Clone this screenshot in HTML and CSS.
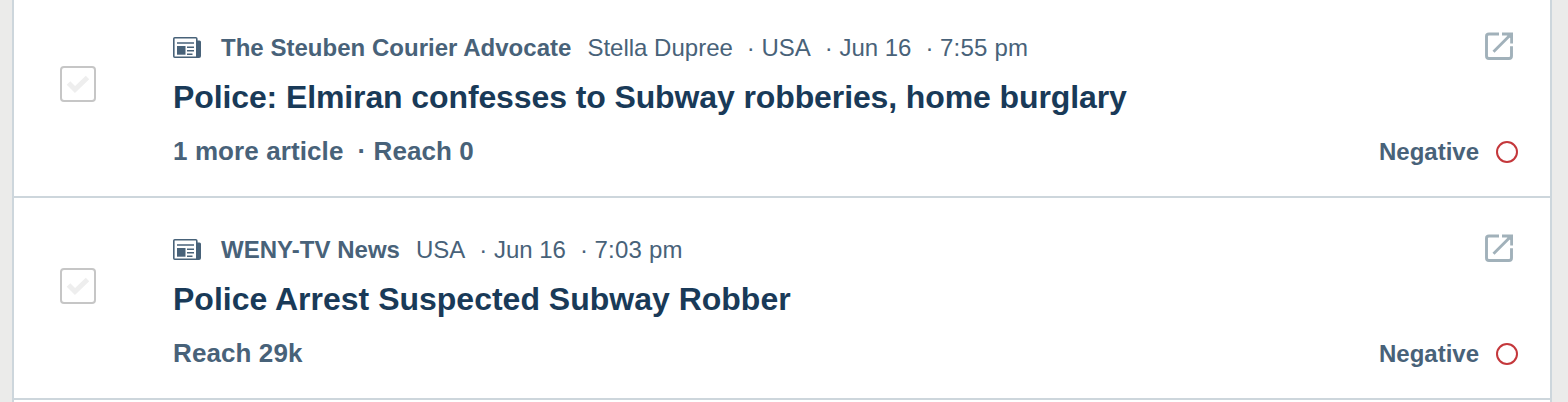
FILE: index.html
```html
<!DOCTYPE html>
<html lang="en">
<head>
<meta charset="utf-8">
<title>Articles</title>
<link rel="stylesheet" href="styles.css">
</head>
<body>
<svg class="defs" width="0" height="0">
  <symbol id="news" viewBox="0 0 28 22">
    <path d="M23 3.500h3.500q1.500 0 1.500 1.500v14q0 2-2 2H22z" fill="#486279"/>
    <rect x=".8" y=".8" width="23" height="19.400" rx="1" fill="#fff" stroke="#486279" stroke-width="1.600"/>
    <path d="M4 6h17M14 10.200h7M14 13.700h7M14 17.200h5.500" stroke="#486279" stroke-width="1.500"/>
    <rect x="4" y="9" width="8.500" height="8.700" fill="#486279"/>
  </symbol>
  <symbol id="open" viewBox="0 0 28 28">
    <path d="M14 2H4Q1.500 2 1.500 4.300v19.700q0 2.500 2.500 2.500h20q2.500 0 2.500-2.500V14.300M8.500 19.700L25 3.200" fill="none" stroke="#a1b1ba" stroke-width="2.900"/>
    <path d="M17 .6H28V11.500H25.200V6L22 3.400H17z" fill="#a1b1ba"/>
  </symbol>
  <symbol id="tick" viewBox="0 0 24 18">
    <path d="M2.500 8l6.500 6.500L21.500 2.500" fill="none" stroke="#eeeeee" stroke-width="5"/>
  </symbol>
</svg>
<main class="list">
  <article class="row">
    <span class="checkbox"><svg width="24" height="18"><use href="#tick"/></svg></span>
    <div class="body">
      <div class="meta">
        <svg class="news" width="28" height="22"><use href="#news"/></svg>
        <b class="source">The Steuben Courier Advocate</b>
        <span>Stella Dupree</span><i class="dot">·</i><span>USA</span><i class="dot">·</i><span>Jun 16</span><i class="dot">·</i><span class="time">7:55 pm</span>
      </div>
      <h2 class="title title-long">Police: Elmiran confesses to Subway robberies, home burglary</h2>
      <div class="stats"><span>1 more article</span><i class="dot">·</i><span>Reach 0</span></div>
    </div>
    <div class="side">
      <svg class="open" width="28" height="28"><use href="#open"/></svg>
      <div class="sentiment">Negative<span class="ring"></span></div>
    </div>
  </article>
  <article class="row">
    <span class="checkbox"><svg width="24" height="18"><use href="#tick"/></svg></span>
    <div class="body">
      <div class="meta">
        <svg class="news" width="28" height="22"><use href="#news"/></svg>
        <b class="source">WENY-TV News</b>
        <span>USA</span><i class="dot">·</i><span>Jun 16</span><i class="dot">·</i><span class="time">7:03 pm</span>
      </div>
      <h2 class="title">Police Arrest Suspected Subway Robber</h2>
      <div class="stats"><span>Reach 29k</span></div>
    </div>
    <div class="side">
      <svg class="open" width="28" height="28"><use href="#open"/></svg>
      <div class="sentiment">Negative<span class="ring"></span></div>
    </div>
  </article>
</main>
</body>
</html>
```
FILE: styles.css
```css
* { box-sizing: border-box; }
body {
  margin: 0;
  height: 402px;
  overflow: hidden;
  background: #ebebea;
  color: #486279;
  font-family: "Liberation Sans", Arial, sans-serif;
}
.defs { display: none; }
.list {
  margin: -4px 16px 0 12px;
  height: 410px;
  background: #fff;
  border: solid #cdd6dc;
  border-width: 0 2px;
}
.row {
  display: flex;
  height: 202px;
  padding: 0 32px 0 46px;
  border-bottom: 2px solid #cdd6dc;
}
.checkbox {
  display: flex;
  align-items: center;
  justify-content: center;
  width: 36px;
  height: 36px;
  margin: 70px 77px 0 0;
  border: 2px solid #c6c6c6;
  border-radius: 4px;
}
.body { flex: 1; white-space: nowrap; }
.meta {
  display: flex;
  height: 32px;
  margin-top: 36px;
  font-size: 24px;
  line-height: 32px;
}
.news { margin: 5px 20px 0 0; }
.source { margin-right: 16px; letter-spacing: .02px; }
.dot { width: 28.6px; padding-left: 14px; font-style: normal; }
.time { letter-spacing: .2px; }
.title {
  margin: 13px 0 0;
  color: #193a58;
  font-size: 32px;
  line-height: 40px;
  font-weight: 700;
}
.title-long { letter-spacing: -.11px; }
.stats {
  display: flex;
  margin-top: 17px;
  font-size: 26px;
  font-weight: 700;
  line-height: 34px;
  letter-spacing: .1px;
}
.stats .dot { width: 30px; }
.side {
  display: flex;
  flex-direction: column;
  align-items: flex-end;
}
.open { margin: 36px 5px 0 0; }
.sentiment {
  display: flex;
  align-items: center;
  margin-top: 76px;
  font-size: 24px;
  font-weight: 700;
  line-height: 32px;
}
.ring {
  width: 22px;
  height: 22px;
  margin: -1px 0 0 17px;
  border: 2px solid #c4373b;
  border-radius: 50%;
}
```
